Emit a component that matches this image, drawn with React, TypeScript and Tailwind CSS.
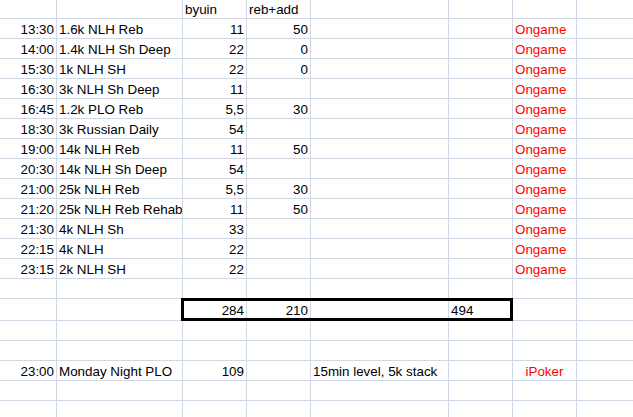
import React from "react";

type Cell = { t?: string; align?: "l" | "r" | "c"; red?: boolean };

const widths = ["w-[57px]", "w-[126px]", "w-[64px]", "w-[64px]", "w-[138px]", "w-[64px]", "w-[64px]", "flex-1"];

function Row({
  cells,
  h,
  pt,
  children,
}: {
  cells: Cell[];
  h: string;
  pt: string;
  children?: React.ReactNode;
}) {
  return (
    <div className={`relative flex ${h} border-b border-[#d0d7e5]`}>
      {widths.map((w, i) => {
        const c = cells[i] || {};
        const al =
          c.align === "r" ? "justify-end pr-[2px]" : c.align === "c" ? "justify-center" : "justify-start pl-[2px]";
        return (
          <div
            key={i}
            className={`${w} ${i < 7 ? "border-r border-[#d0d7e5]" : ""} shrink-0 flex ${al} ${pt} leading-[17px] whitespace-nowrap ${
              c.red ? "text-[#ff0000]" : "text-black"
            }`}
          >
            {c.t ?? ""}
          </div>
        );
      })}
      {children}
    </div>
  );
}

const data: [string, string, string, string][] = [
  ["13:30", "1.6k NLH Reb", "11", "50"],
  ["14:00", "1.4k NLH Sh Deep", "22", "0"],
  ["15:30", "1k NLH SH", "22", "0"],
  ["16:30", "3k NLH Sh Deep", "11", ""],
  ["16:45", "1.2k PLO Reb", "5,5", "30"],
  ["18:30", "3k Russian Daily", "54", ""],
  ["19:00", "14k NLH Reb", "11", "50"],
  ["20:30", "14k NLH Sh Deep", "54", ""],
  ["21:00", "25k NLH Reb", "5,5", "30"],
  ["21:20", "25k NLH Reb Rehab", "11", "50"],
  ["21:30", "4k NLH Sh", "33", ""],
  ["22:15", "4k NLH", "22", ""],
  ["23:15", "2k NLH SH", "22", ""],
];

export default function App() {
  return (
    <div className="w-[633px] h-[417px] overflow-hidden bg-white font-['Liberation_Sans',Arial,sans-serif] text-[13.4px]">
      <Row h="h-[19px]" pt="pt-[1px]" cells={[{}, {}, { t: "byuin" }, { t: "reb+add" }]} />
      {data.map((d) => (
        <Row
          key={d[0]}
          h="h-[20px]"
          pt="pt-[2px]"
          cells={[
            { t: d[0], align: "r" },
            { t: d[1] },
            { t: d[2], align: "r" },
            { t: d[3], align: "r" },
            {},
            {},
            { t: "Ongame", red: true },
          ]}
        />
      ))}
      <Row h="h-[20px]" pt="pt-[2px]" cells={[]} />
      <Row
        h="h-[22px]"
        pt="pt-[3px]"
        cells={[{}, {}, { t: "284", align: "r" }, { t: "210", align: "r" }, {}, { t: "494" }]}
      >
        <div className="absolute left-[181px] top-[-1px] w-[332px] h-[23px] border-[3px] border-black" />
      </Row>
      <Row h="h-[20px]" pt="pt-[2px]" cells={[]} />
      <Row h="h-[20px]" pt="pt-[2px]" cells={[]} />
      <Row
        h="h-[20px]"
        pt="pt-[2px]"
        cells={[
          { t: "23:00", align: "r" },
          { t: "Monday Night PLO" },
          { t: "109", align: "r" },
          {},
          { t: "15min level, 5k stack" },
          {},
          { t: "iPoker", align: "c", red: true },
        ]}
      />
      <Row h="h-[20px]" pt="pt-[2px]" cells={[]} />
      <Row h="h-[20px]" pt="pt-[2px]" cells={[]} />
    </div>
  );
}
